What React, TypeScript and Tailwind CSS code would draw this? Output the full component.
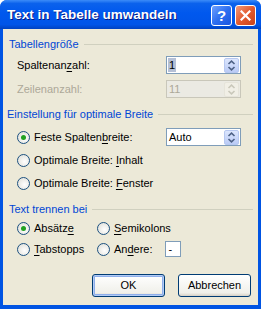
import React from 'react';

const font = { fontFamily: '"Liberation Sans", Arial, sans-serif' };

const U = ({ children }: { children: React.ReactNode }) => <span className="underline underline-offset-[2px]">{children}</span>;

const Spinner = ({ disabled }: { disabled?: boolean }) => (
    <div className={`w-[15px] h-[15px] mr-[1px] flex flex-col items-center justify-center rounded-[2px] border ${disabled ? 'border-[#E6E4DA] bg-[#F1EFE6]' : 'border-[#B7C8F0] bg-[linear-gradient(to_bottom,#DCE6FD,#BACBF6)]'}`}>
        <svg width="9" height="11" viewBox="0 0 9 11" fill="none" stroke={disabled ? '#C9C7BA' : '#4D6185'} strokeWidth="1.6">
            <path d="M1.5 4 L4.5 1.2 L7.5 4" />
            <path d="M1.5 7 L4.5 9.8 L7.5 7" />
        </svg>
    </div>
);

const SpinBox = ({ value, disabled, selected }: { value: string; disabled?: boolean; selected?: boolean }) => (
    <div className={`w-[75px] h-[18px] flex items-center justify-between border ${disabled ? 'border-[#C9C7BA] bg-[#EBEAE3] text-[#ACA899]' : 'border-[#7F9DB9] bg-white text-black'}`}>
        <span className={`ml-[1px] px-[1px] leading-[14px] ${selected ? 'bg-[#B5C0D6]' : ''}`}>{value}</span>
        <Spinner disabled={disabled} />
    </div>
);

const Radio = ({ checked }: { checked?: boolean }) => (
    <div className="w-[13px] h-[13px] rounded-full border border-[#1C5180] bg-[radial-gradient(circle_at_60%_60%,#FFFFFF,#DCDBD3)] flex items-center justify-center shrink-0">
        {checked && <div className="w-[5px] h-[5px] rounded-full bg-[#21A121]" />}
    </div>
);

const GroupHeader = ({ title }: { title: string }) => (
    <div className="flex items-center h-[14px] pr-[5px]">
        <span className="text-[#0046D5] whitespace-nowrap">{title}</span>
        <div className="flex-1 h-px bg-[#D0D0BF] ml-[5px]" />
    </div>
);

const XpButton = ({ children, isDefault }: { children: React.ReactNode; isDefault?: boolean }) => (
    <button className={`w-[73px] h-[23px] rounded-[3px] border border-[#003C74] bg-[linear-gradient(to_bottom,#FFFFFF,#F0F0EA_85%,#D6D0C5)] text-black text-[11px] ${isDefault ? 'shadow-[inset_0_0_0_1px_#B2CBF5,inset_0_0_0_2px_#8EAEEA]' : ''}`}>
        {children}
    </button>
);

export default function App() {
    return (
        <div className="w-[261px] h-[309px] bg-white" style={font}>
            <div className="w-full h-full flex flex-col rounded-t-[7px] bg-[#0054E3] overflow-hidden">
                {/* Title bar */}
                <div className="h-[29px] shrink-0 flex items-center justify-between pl-[7px] pr-[5px] bg-[linear-gradient(to_bottom,#3C8CF8_0%,#0B62EC_12%,#0058EE_45%,#0055E8_85%,#0042C0_100%)]">
                    <span className="text-white font-bold text-[13.5px] [text-shadow:1px_1px_0_#0A1883] mt-[1px]">Text in Tabelle umwandeln</span>
                    <div className="flex gap-[3px] mt-[2px]">
                        <div className="w-[21px] h-[21px] rounded-[3px] border border-white bg-[linear-gradient(135deg,#6FA1FF,#2E6FF0_50%,#1A55E0)] flex items-center justify-center text-white font-bold text-[15px] leading-none">?</div>
                        <div className="w-[21px] h-[21px] rounded-[3px] border border-white bg-[linear-gradient(135deg,#F09A7C,#E35A2E_50%,#C8421A)] flex items-center justify-center">
                            <svg width="11" height="11" viewBox="0 0 11 11" stroke="white" strokeWidth="2.2" strokeLinecap="square">
                                <path d="M1.5 1.5 L9.5 9.5 M9.5 1.5 L1.5 9.5" />
                            </svg>
                        </div>
                    </div>
                </div>

                {/* Body */}
                <div className="flex-1 mx-[3px] mb-[4px] bg-[#ECE9D8] text-[11px] text-black flex flex-col pl-[6px] pt-[8px]">
                    <GroupHeader title="Tabellengröße" />
                    <div className="flex items-center justify-between h-[18px] mt-[5px] pl-[8px] pr-[17px]">
                        <span>Spaltenan<U>z</U>ahl:</span>
                        <SpinBox value="1" selected />
                    </div>
                    <div className="flex items-center justify-between h-[18px] mt-[6px] pl-[8px] pr-[17px] text-[#ACA899]">
                        <span>Zeilenanzahl:</span>
                        <SpinBox value="11" disabled />
                    </div>

                    <div className="mt-[9px] -ml-[2px]">
                        <GroupHeader title="Einstellung für optimale Breite" />
                    </div>
                    <div className="flex items-center justify-between h-[20px] mt-[6px] pl-[8px] pr-[17px]">
                        <div className="flex items-center gap-[4px]">
                            <Radio checked />
                            <span>Feste Spalten<U>b</U>reite:</span>
                        </div>
                        <SpinBox value="Auto" />
                    </div>
                    <div className="flex items-center gap-[4px] h-[20px] mt-[3px] pl-[8px]">
                        <Radio />
                        <span>Optimale Breite: <U>I</U>nhalt</span>
                    </div>
                    <div className="flex items-center gap-[4px] h-[20px] mt-[3px] pl-[8px]">
                        <Radio />
                        <span>Optimale Breite: <U>F</U>enster</span>
                    </div>

                    <div className="mt-[9px]">
                        <GroupHeader title="Text trennen bei" />
                    </div>
                    <div className="grid grid-cols-[80px_1fr] mt-[3px] pl-[8px] gap-y-[3px]">
                        <div className="flex items-center gap-[4px] h-[18px]">
                            <Radio checked />
                            <span>Absätz<U>e</U></span>
                        </div>
                        <div className="flex items-center gap-[4px] h-[18px]">
                            <Radio />
                            <span><U>S</U>emikolons</span>
                        </div>
                        <div className="flex items-center gap-[4px] h-[18px]">
                            <Radio />
                            <span><U>T</U>abstopps</span>
                        </div>
                        <div className="flex items-center gap-[4px] h-[18px]">
                            <Radio />
                            <span>An<U>d</U>ere:</span>
                            <div className="w-[16px] h-[16px] ml-[8px] border border-[#7F9DB9] bg-white flex items-center pl-[3px]">-</div>
                        </div>
                    </div>

                    <div className="flex justify-end gap-[13px] mt-[16px] pr-[7px]">
                        <XpButton isDefault>OK</XpButton>
                        <XpButton>Abbrechen</XpButton>
                    </div>
                </div>
            </div>
        </div>
    );
}
